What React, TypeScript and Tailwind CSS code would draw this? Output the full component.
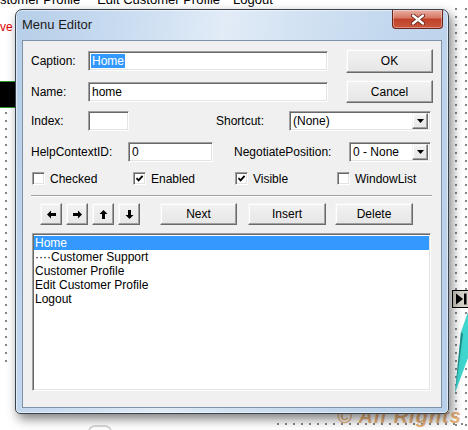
import React from 'react';

const FONT = "font-['Liberation_Sans',Arial,sans-serif]";

function Raised({ className = '', children }: { className?: string; children?: React.ReactNode }) {
  return (
    <div
      className={`flex items-center justify-center border border-t-[#f4f4f4] border-l-[#f4f4f4] border-r-[#6a6a6a] border-b-[#6a6a6a] bg-[linear-gradient(to_bottom,#f2f2f2,#e6e6e6)] shadow-[inset_-1px_-1px_0_#a0a0a0,inset_1px_1px_0_#ffffff] text-black ${className}`}
    >
      {children}
    </div>
  );
}

function Sunken({ className = '', children }: { className?: string; children?: React.ReactNode }) {
  return (
    <div
      className={`flex items-center border border-t-[#a0a0a0] border-l-[#a0a0a0] border-r-white border-b-white bg-white shadow-[inset_1px_1px_0_#696969,inset_-1px_-1px_0_#e3e3e3] ${className}`}
    >
      {children}
    </div>
  );
}

function Combo({ className, value }: { className: string; value: string }) {
  return (
    <Sunken className={`${className} h-[20px] pr-[2px]`}>
      <span className="flex-1 pl-[3px] leading-none">{value}</span>
      <Raised className="w-[16px] h-[16px]">
        <svg width="7" height="4" viewBox="0 0 7 4">
          <path d="M0 0h7L3.5 4z" fill="#000" />
        </svg>
      </Raised>
    </Sunken>
  );
}

function Check({ checked, label, className = '' }: { checked?: boolean; label: string; className?: string }) {
  return (
    <div className={`flex items-center h-[13px] ${className}`}>
      <div className="flex items-center justify-center w-[13px] h-[13px] border border-t-[#a0a0a0] border-l-[#a0a0a0] border-r-white border-b-white bg-white shadow-[inset_1px_1px_0_#696969,inset_-1px_-1px_0_#e3e3e3]">
        {checked && (
          <svg width="9" height="9" viewBox="0 0 9 9">
            <path d="M1.5 4.2 3.6 6.4 7.6 1.8" stroke="#000" strokeWidth="1.8" fill="none" />
          </svg>
        )}
      </div>
      <span className="ml-[5px]">{label}</span>
    </div>
  );
}

const ARROWS: Record<string, string> = {
  left: 'M0 4.5 4 0.5V3h5v3H4v2.5z',
  right: 'M9 4.5 5 0.5V3H0v3h5v2.5z',
  up: 'M4.5 0 8.5 4H6v5H3V4H0.5z',
  down: 'M4.5 9 8.5 5H6V0H3v5H0.5z',
};

const ITEMS = ['Home', '····Customer Support', 'Customer Profile', 'Edit Customer Profile', 'Logout'];

const DOTS = 'bg-[radial-gradient(circle_at_1px_1px,#444_0.6px,transparent_0.9px)]';

export default function App() {
  return (
    <div className={`relative w-[468px] h-[430px] overflow-hidden bg-white text-[12px] text-black ${FONT}`}>
      {/* page behind the dialog */}
      <div className="absolute left-0 top-[-8px] flex whitespace-pre text-[13px] leading-[15px]">
        <span>stomer Profile</span>
        <span className="ml-[17px]">Edit Customer Profile</span>
        <span className="ml-[13px]">Logout</span>
      </div>
      <div className="absolute left-0 top-[18px] text-[12px] text-[#e00000] whitespace-pre">ve Support</div>
      <div className="absolute left-0 top-[81px] w-[40px] h-[27px] bg-black border-t border-b border-[#2a9a2a]" />
      <div className={`absolute left-[5px] top-[112px] w-[3px] h-[252px] ${DOTS} bg-[length:8px_8px]`} />
      <div className={`absolute left-[455px] top-[8px] w-[13px] h-[422px] ${DOTS} bg-[length:10px_8px]`} />
      <div className={`absolute left-[277px] top-[423px] w-[191px] h-[3px] ${DOTS} bg-[length:8px_8px]`} />
      <div className="absolute left-[452px] top-[290px] w-[20px] h-[18px] border border-black bg-[#d4d0c8] flex items-center pl-[2px]">
        <svg width="12" height="12" viewBox="0 0 12 12">
          <path d="M1 0.5 8 6 1 11.5z" fill="#000" />
          <rect x="9" y="0.5" width="2.5" height="11" fill="#000" />
        </svg>
      </div>
      <svg className="absolute left-[440px] top-[296px]" width="28" height="100" viewBox="0 0 28 100">
        <path d="M15 97 21 36 28 16V62z" fill="#3fd6cf" />
        <path d="M15 97 21 36 23 38z" fill="#1f8f88" />
      </svg>
      <div className="absolute left-[337px] top-[401px] text-[20px] font-bold italic text-[#e9b27a] whitespace-pre tracking-[1px]">
        © All Rights
      </div>
      <div className="absolute left-[88px] top-[425px] w-[24px] h-[14px] rounded-full border-2 border-[#d8d8d8]" />

      {/* dialog window */}
      <div className="absolute left-[15px] top-[9px] w-[434px] h-[405px] flex flex-col border border-[#39424e] rounded-t-[7px] rounded-b-[5px] bg-[linear-gradient(100deg,#b6cee8_0%,#c9dcf1_22%,#e2ecf7_42%,#d4e3f3_55%,#c3d8ee_75%,#b8cfe9_100%)] shadow-[3px_5px_11px_rgba(0,0,0,0.5),inset_0_0_0_1px_rgba(255,255,255,0.55)]">
        <div className="h-[30px] flex items-center pl-[6px] text-[13px] text-[#1b1b1b]">Menu Editor</div>
        <div className="absolute top-0 right-[5px] w-[51px] h-[19px] flex items-center justify-center border border-t-0 border-[#6b2418] rounded-b-[4px] bg-[linear-gradient(to_bottom,#eab0a4_0%,#d77a66_42%,#c1412a_52%,#c9563c_100%)] shadow-[inset_0_0_0_1px_rgba(255,255,255,0.35)]">
          <svg width="14" height="11" viewBox="0 0 14 11">
            <path d="M2 1.5 12 9.5M12 1.5 2 9.5" stroke="#5a1a10" strokeWidth="4" strokeLinecap="round" />
            <path d="M2 1.5 12 9.5M12 1.5 2 9.5" stroke="#ffffff" strokeWidth="2.4" strokeLinecap="round" />
          </svg>
        </div>

        <div className="mx-[6px] h-[368px] border border-[#7f91a7] bg-[#f0f0f0] pt-[8px] pl-[8px] flex flex-col">
          <div className="flex items-center h-[24px]">
            <span className="w-[57px]">Caption:</span>
            <Sunken className="w-[240px] h-[20px] pl-[2px]">
              <span className="bg-[#3399ff] text-white px-[1px] leading-[14px]">Home</span>
            </Sunken>
            <Raised className="ml-[18px] w-[87px] h-[24px]">OK</Raised>
          </div>
          <div className="flex items-center h-[23px] mt-[7px]">
            <span className="w-[57px]">Name:</span>
            <Sunken className="w-[240px] h-[20px] pl-[3px]">home</Sunken>
            <Raised className="ml-[18px] w-[87px] h-[23px]">Cancel</Raised>
          </div>
          <div className="flex items-center h-[21px] mt-[7px]">
            <span className="w-[57px]">Index:</span>
            <Sunken className="w-[41px] h-[20px]" />
            <span className="ml-[87px] w-[73px]">Shortcut:</span>
            <Combo className="w-[142px]" value="(None)" />
          </div>
          <div className="flex items-center h-[20px] mt-[11px]">
            <span className="w-[97px]">HelpContextID:</span>
            <Sunken className="w-[85px] h-[20px] pl-[3px]">0</Sunken>
            <span className="ml-[21px] w-[115px]">NegotiatePosition:</span>
            <Combo className="w-[82px]" value="0 - None" />
          </div>
          <div className="flex items-center mt-[10px] pl-[1px]">
            <Check className="w-[101px]" label="Checked" />
            <Check className="w-[102px]" checked label="Enabled" />
            <Check className="w-[102px]" checked label="Visible" />
            <Check label="WindowList" />
          </div>
          <div className="mt-[10px] w-[401px] h-[2px] border-t border-b border-t-[#a0a0a0] border-b-white" />
          <div className="flex items-center h-[22px] mt-[6px] pl-[9px]">
            <div className="flex gap-[4px]">
              {['left', 'right', 'up', 'down'].map(d => (
                <Raised key={d} className="w-[22px] h-[22px]">
                  <svg width="9" height="9" viewBox="0 0 9 9">
                    <path d={ARROWS[d]} fill="#000" />
                  </svg>
                </Raised>
              ))}
            </div>
            <Raised className="ml-[20px] w-[77px] h-[22px]">Next</Raised>
            <Raised className="ml-[11px] w-[78px] h-[22px]">Insert</Raised>
            <Raised className="ml-[9px] w-[78px] h-[22px]">Delete</Raised>
          </div>
          <Sunken className="mt-[8px] ml-[1px] w-[399px] h-[158px] flex-col items-stretch p-[1px] pt-[2px]">
            {ITEMS.map((t, i) => (
              <div
                key={t}
                className={`h-[14px] leading-[14px] pl-[1px] whitespace-pre ${i === 0 ? 'bg-[#3399ff] text-white' : ''}`}
              >
                {t}
              </div>
            ))}
          </Sunken>
        </div>
      </div>
    </div>
  );
}
